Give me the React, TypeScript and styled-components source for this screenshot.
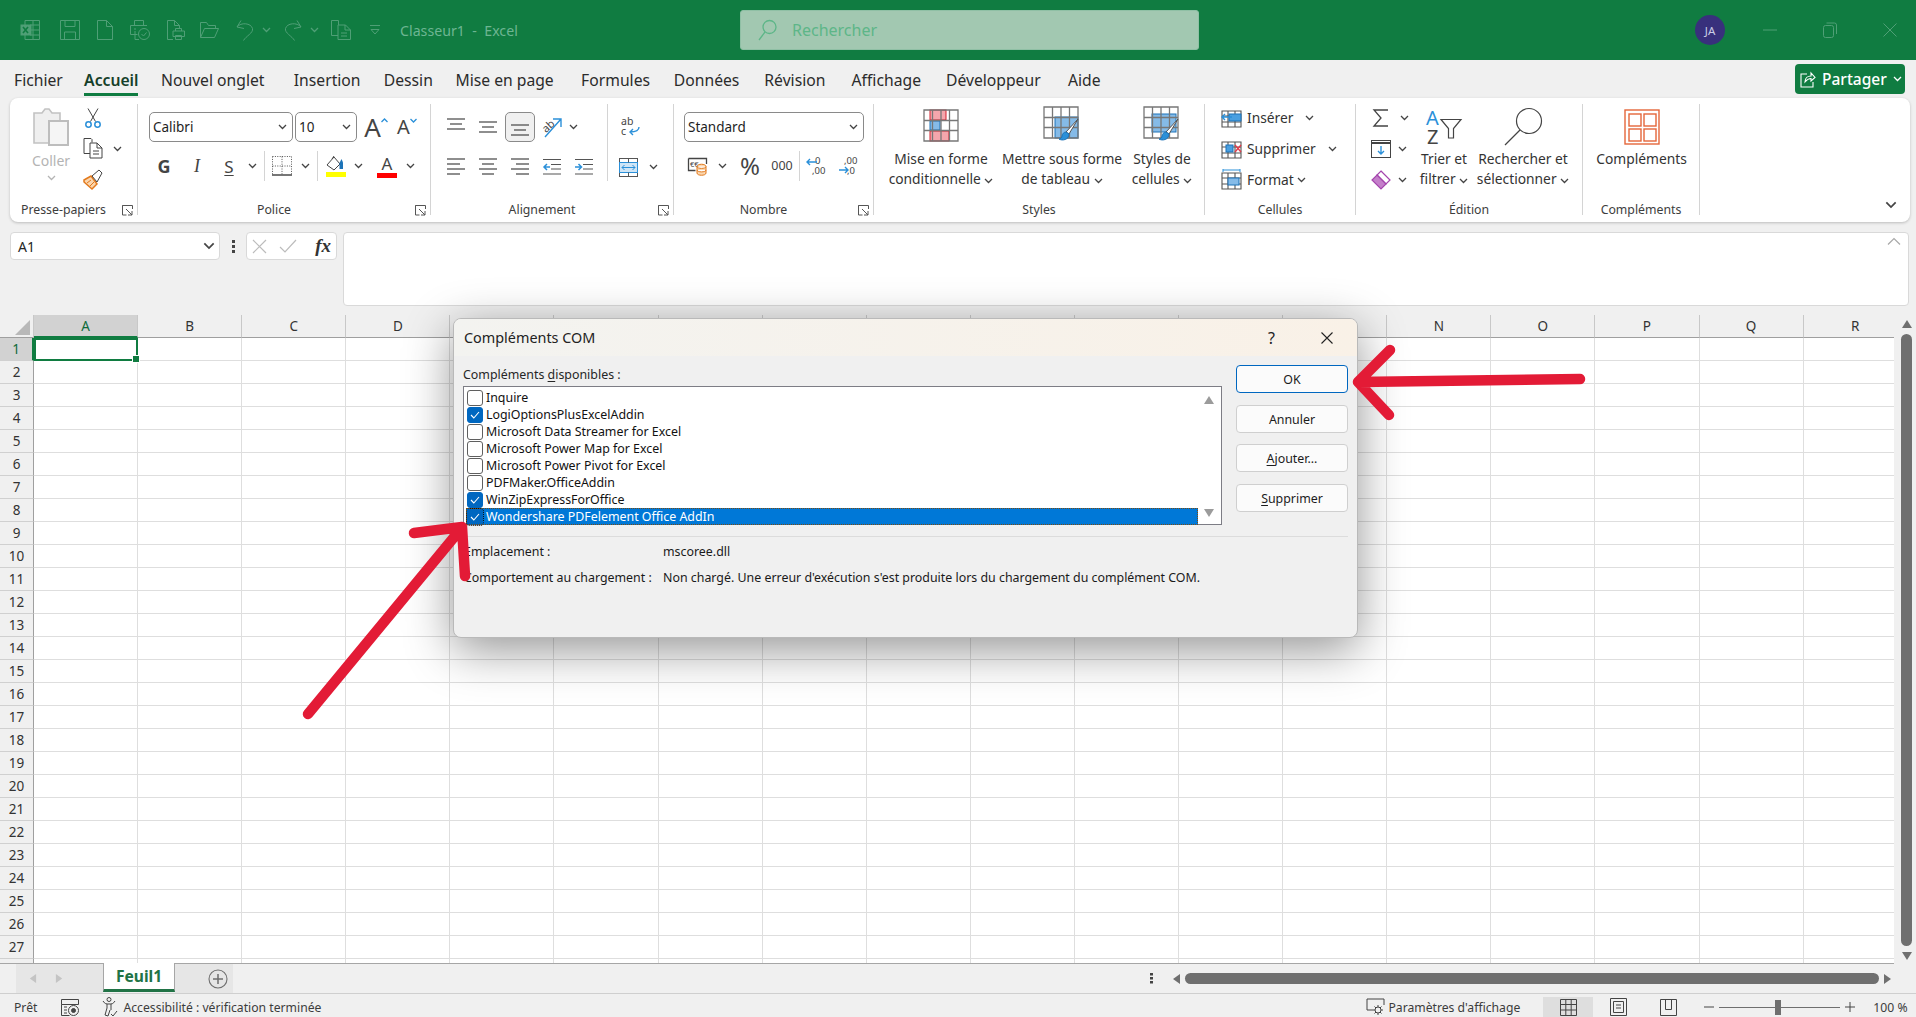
import React from "react"
import styled, { createGlobalStyle } from "styled-components"

const FONT = `"Noto Sans", "Open Sans", sans-serif`
const GREEN = "#107c41"
const DIM = "#4f9f76"
const BLUE = "#2b90d9"

const Global = createGlobalStyle`
  html, body { margin: 0; padding: 0; height: 100%; overflow: hidden; background: #f0f0f0; }
  body { font-family: ${FONT}; color: #262626; }
  * { box-sizing: border-box; }
  svg { overflow: visible; }
`

const Page = styled.div`
  position: relative;
  width: 100vw;
  height: 100vh;
  display: flex;
  flex-direction: column;
  overflow: hidden;
  background: #f0f0f0;
`

/* title bar */
const TitleBar = styled.div`
  height: 60px;
  flex: none;
  display: flex;
  align-items: center;
  background: ${GREEN};
`
const Tool = styled.span<{ $w: number; $ml?: number; $h?: number }>`
  flex: none;
  display: inline-flex;
  align-items: center;
  justify-content: center;
  width: ${(p) => p.$w}px;
  height: ${(p) => p.$h ?? 24}px;
  margin-left: ${(p) => p.$ml ?? 0}px;
`
const DocTitle = styled.span`
  margin-left: 18px;
  font-size: 14.2px;
  color: #6db592;
  white-space: pre;
`
const SearchBox = styled.div`
  position: absolute;
  left: 740px;
  top: 10px;
  width: 459px;
  height: 40px;
  display: flex;
  align-items: center;
  gap: 15px;
  padding: 0 17px;
  border-radius: 3px;
  border: 1px solid #8fc0a5;
  background: #a2c8b1;
  color: #5db688;
  font-size: 16px;
`
const Avatar = styled.span`
  position: absolute;
  left: 1695px;
  top: 15px;
  width: 30px;
  height: 30px;
  border-radius: 50%;
  background: #38307c;
  color: #c9cde6;
  font-size: 11.5px;
  display: flex;
  align-items: center;
  justify-content: center;
`
const WindowButtons = styled.div`
  position: absolute;
  left: 1740px;
  top: 18px;
  display: flex;
`

/* tabs */
const TabRow = styled.div`
  height: 38px;
  flex: none;
  display: flex;
  align-items: flex-start;
  padding: 0 11px 0 14px;
`
const Tab = styled.span<{ $on?: boolean; $mr: number }>`
  position: relative;
  margin-right: ${(p) => p.$mr}px;
  height: 36px;
  line-height: 40px;
  font-size: 15.7px;
  white-space: nowrap;
  font-weight: ${(p) => (p.$on ? 600 : 400)};
  color: ${(p) => (p.$on ? "#163f2a" : "#2b2b2b")};
  border-bottom: ${(p) => (p.$on ? `3px solid ${GREEN}` : "3px solid transparent")};
`
const Share = styled.button`
  margin: 4px 0 0 auto;
  width: 110px;
  height: 30px;
  border: 0;
  border-radius: 4px;
  background: ${GREEN};
  color: #fff;
  display: flex;
  align-items: center;
  gap: 6px;
  padding: 0 5px;
  font: 500 15.5px ${FONT};
`

/* ribbon */
const Ribbon = styled.div`
  position: relative;
  flex: none;
  height: 124px;
  margin: 0 6px 0 10px;
  padding: 6px 0 7px;
  display: flex;
  background: #fff;
  border-radius: 8px;
  box-shadow: 0 1px 3px rgba(0, 0, 0, 0.22);
`
const Group = styled.div<{ $w: number }>`
  flex: none;
  width: ${(p) => p.$w}px;
  height: 100%;
  display: flex;
  flex-direction: column;
  border-right: 1px solid #d4d4d4;
`
const GroupBody = styled.div<{ $pl?: number }>`
  flex: 1;
  min-height: 0;
  padding-left: ${(p) => p.$pl ?? 0}px;
  display: flex;
`
const GroupFoot = styled.div`
  flex: none;
  height: 20px;
  padding-top: 10px;
  display: flex;
  align-items: center;
  font-size: 12.3px;
  line-height: 14px;
  color: #3d3d3d;
  white-space: nowrap;
`
const FootLabel = styled.span`
  flex: 1;
  text-align: center;
`
const GroupLaunch = styled.span`
  flex: none;
  margin: 0 4px 0 5px;
  display: flex;
`
const Col = styled.div<{ $w?: number; $ml?: number; $mt?: number; $pt?: number; $center?: boolean }>`
  flex: none;
  display: flex;
  flex-direction: column;
  width: ${(p) => (p.$w ? `${p.$w}px` : "auto")};
  margin-left: ${(p) => p.$ml ?? 0}px;
  margin-top: ${(p) => p.$mt ?? 0}px;
  padding-top: ${(p) => p.$pt ?? 0}px;
  align-items: ${(p) => (p.$center ? "center" : "stretch")};
`
const Row = styled.div<{ $h?: number; $mt?: number; $ml?: number }>`
  display: flex;
  align-items: center;
  height: ${(p) => (p.$h ? `${p.$h}px` : "auto")};
  margin-top: ${(p) => p.$mt ?? 0}px;
  margin-left: ${(p) => p.$ml ?? 0}px;
`
const Select = styled.div<{ $w: number; $mr?: number }>`
  flex: none;
  width: ${(p) => p.$w}px;
  height: 30px;
  margin-right: ${(p) => p.$mr ?? 0}px;
  padding: 0 5px 0 3px;
  display: flex;
  align-items: center;
  justify-content: space-between;
  border: 1px solid #8a8a8a;
  border-radius: 5px;
  font-size: 13.5px;
  color: #1e1e1e;
`
const ToolSep = styled.span<{ $h?: number; $mx?: number }>`
  flex: none;
  width: 1px;
  height: ${(p) => p.$h ?? 30}px;
  margin: 0 ${(p) => p.$mx ?? 3}px;
  background: #d4d4d4;
`
const ActiveTool = styled(Tool)`
  background: #f0f0f0;
  border: 1px solid #8a8a8a;
  border-radius: 5px;
`
const Letter = styled.span<{ $size?: number; $weight?: number; $italic?: boolean; $under?: boolean; $serif?: boolean }>`
  font-family: ${(p) => (p.$serif ? `"Liberation Serif", serif` : FONT)};
  font-size: ${(p) => p.$size ?? 16}px;
  font-weight: ${(p) => p.$weight ?? 400};
  font-style: ${(p) => (p.$italic ? "italic" : "normal")};
  text-decoration: ${(p) => (p.$under ? "underline" : "none")};
  text-underline-offset: 2px;
  color: #444;
  line-height: 1;
`
const ColorBar = styled.span<{ $c: string }>`
  display: block;
  width: 20px;
  height: 5px;
  margin-top: 1px;
  background: ${(p) => p.$c};
`
const Stack = styled.span`
  display: inline-flex;
  flex-direction: column;
  align-items: center;
`
const BigButton = styled.div<{ $w: number; $ml?: number }>`
  flex: none;
  width: ${(p) => p.$w}px;
  margin-left: ${(p) => p.$ml ?? 0}px;
  display: flex;
  flex-direction: column;
  align-items: center;
  padding-top: 2px;
  font-size: 13.8px;
  line-height: 20px;
  color: #333;
  text-align: center;
  white-space: nowrap;
`
const BigIcon = styled.span`
  height: 41px;
  display: flex;
  align-items: center;
  margin-bottom: 2px;
`
const MenuRow = styled.div`
  height: 32px;
  display: flex;
  align-items: center;
  font-size: 13.8px;
  color: #333;
  white-space: nowrap;
`
const MenuIcon = styled.span`
  flex: none;
  width: 22px;
  margin: 0 5px 0 15px;
  display: flex;
  justify-content: center;
`
const MenuChev = styled.span<{ $ml: number }>`
  margin-left: ${(p) => p.$ml}px;
  display: flex;
`
const PasteLabel = styled.span`
  font-size: 14px;
  line-height: 18px;
  margin-top: 6px;
  color: #b4b4b4;
`
const PasteChev = styled.span`
  margin-top: 5px;
  display: flex;
`
const Collapse = styled.span`
  position: absolute;
  right: 13px;
  bottom: 13px;
  display: flex;
`

/* formula bar */
const FormulaBar = styled.div`
  flex: none;
  height: 74px;
  margin: 10px 7px 9px 10px;
  display: flex;
  align-items: flex-start;
`
const NameBox = styled.div`
  width: 210px;
  height: 28px;
  display: flex;
  align-items: center;
  justify-content: space-between;
  padding: 0 4px 0 7px;
  background: #fff;
  border: 1px solid #d9d9d9;
  border-radius: 4px;
  font-size: 14px;
`
const Grip = styled.span`
  width: 26px;
  height: 28px;
  display: flex;
  justify-content: center;
  align-items: center;
`
const FxBox = styled.div`
  width: 91px;
  height: 28px;
  display: flex;
  align-items: center;
  padding: 0 5px;
  gap: 12px;
  background: #fff;
  border: 1px solid #d9d9d9;
  border-radius: 4px;
`
const FxText = styled.span`
  margin-left: auto;
  font: italic 700 19px "Liberation Serif", serif;
  color: #333;
`
const FormulaInput = styled.div`
  flex: 1;
  height: 74px;
  margin-left: 6px;
  padding: 5px 8px;
  display: flex;
  justify-content: flex-end;
  background: #fff;
  border: 1px solid #d9d9d9;
  border-radius: 4px;
`

/* sheet */
const SheetArea = styled.div`
  flex: 1;
  min-height: 0;
  display: flex;
`
const Sheet = styled.div`
  flex: 1;
  min-width: 0;
  display: grid;
  grid-template-columns: 34px repeat(18, 104.1px);
  grid-auto-rows: 23px;
  overflow: hidden;
  background: #fff;
  border-bottom: 1px solid #a6a6a6;
`
const Corner = styled.div`
  position: relative;
  background: #f0f0f0;
  border-bottom: 1px solid #9f9f9f;
  border-right: 1px solid #c8c8c8;
  &::after {
    content: "";
    position: absolute;
    right: 3px;
    bottom: 2px;
    border-style: solid;
    border-width: 0 0 15px 15px;
    border-color: transparent transparent #b8b8b8 transparent;
  }
`
const ColHead = styled.div<{ $on?: boolean }>`
  display: flex;
  align-items: center;
  justify-content: center;
  font-size: 13.5px;
  color: ${(p) => (p.$on ? "#0f6b3a" : "#333")};
  background: ${(p) => (p.$on ? "#d2d2d2" : "#f0f0f0")};
  border-right: 1px solid #c8c8c8;
  border-bottom: ${(p) => (p.$on ? `2px solid ${GREEN}` : "1px solid #9f9f9f")};
`
const RowHead = styled.div<{ $on?: boolean }>`
  display: flex;
  align-items: center;
  justify-content: center;
  font-size: 13.5px;
  color: ${(p) => (p.$on ? "#0f6b3a" : "#333")};
  background: ${(p) => (p.$on ? "#d2d2d2" : "#f0f0f0")};
  border-right: ${(p) => (p.$on ? `2px solid ${GREEN}` : "1px solid #9f9f9f")};
  border-bottom: 1px solid #d0d0d0;
`
const Cell = styled.div`
  border-right: 1px solid #dedede;
  border-bottom: 1px solid #dedede;
`
const ActiveCell = styled(Cell)`
  position: relative;
  border: 2px solid ${GREEN};
  &::after {
    content: "";
    position: absolute;
    right: -4px;
    bottom: -4px;
    width: 6px;
    height: 6px;
    background: ${GREEN};
    border: 1px solid #fff;
  }
`
const VScroll = styled.div`
  flex: none;
  width: 22px;
  padding: 4px 4px 3px 7px;
  display: flex;
  flex-direction: column;
  align-items: center;
  justify-content: space-between;
`
const VThumb = styled.div`
  flex: 1;
  width: 11px;
  margin: 5px 0;
  border-radius: 6px;
  background: #6f6f6f;
`

/* sheet tabs */
const SheetBar = styled.div`
  flex: none;
  height: 30px;
  display: flex;
  align-items: flex-start;
  border-bottom: 1px solid #cfcfcf;
`
const SheetNav = styled.div`
  width: 87px;
  height: 29px;
  margin-left: 16px;
  display: flex;
  align-items: center;
  gap: 18px;
  padding-left: 12px;
  background: #e6e6e6;
`
const SheetTab = styled.div`
  width: 72px;
  height: 29px;
  margin-top: -1px;
  padding-bottom: 1px;
  display: flex;
  align-items: center;
  justify-content: center;
  background: #fff;
  border: 1px solid #a6a6a6;
  border-top: 0;
  border-bottom: 3px solid #217346;
  color: #217346;
  font-size: 15.6px;
  font-weight: 700;
`
const AddSheet = styled.div`
  width: 58px;
  height: 29px;
  display: flex;
  align-items: center;
  justify-content: flex-end;
  padding-right: 5px;
  background: #e6e6e6;
`
const Dots = styled.span`
  margin-left: 917px;
  height: 29px;
  width: 10px;
  display: flex;
  align-items: center;
`
const HScroll = styled.div`
  width: 722px;
  height: 29px;
  margin-left: 11px;
  display: flex;
  align-items: center;
  gap: 4px;
`
const HThumb = styled.div`
  flex: 1;
  height: 11px;
  border-radius: 6px;
  background: #6f6f6f;
`

/* status */
const StatusBar = styled.div`
  flex: none;
  height: 23px;
  padding-top: 3px;
  display: flex;
  align-items: center;
  font-size: 12.2px;
  color: #3c3c3c;
  white-space: nowrap;
`
const StatusText = styled.span<{ $ml: number }>`
  margin-left: ${(p) => p.$ml}px;
`
const ViewButton = styled.span<{ $on?: boolean; $ml?: number }>`
  flex: none;
  height: 100%;
  width: 50px;
  margin-left: ${(p) => p.$ml ?? 0}px;
  display: flex;
  align-items: center;
  justify-content: center;
  background: ${(p) => (p.$on ? "#dedede" : "transparent")};
`
const Zoom = styled.div`
  flex: none;
  display: flex;
  align-items: center;
  gap: 5px;
  margin-left: 11px;
`
const ZoomTrack = styled.div`
  position: relative;
  width: 121px;
  height: 1px;
  background: #6f6f6f;
  &::after {
    content: "";
    position: absolute;
    left: 56px;
    top: -7px;
    width: 6px;
    height: 15px;
    background: #6f6f6f;
  }
`

/* dialog */
const Dialog = styled.div`
  position: absolute;
  left: 453px;
  top: 318px;
  width: 905px;
  height: 320px;
  border-radius: 8px;
  background: #f0f0f0;
  border: 1px solid #b9b9b9;
  box-shadow: 0 12px 48px rgba(0, 0, 0, 0.42);
  overflow: hidden;
`
const DialogTitle = styled.div`
  height: 37px;
  display: flex;
  align-items: center;
  padding: 0 24px 0 10px;
  background: linear-gradient(90deg, #f3f3f0, #f9f1e7);
  font-size: 14.4px;
  color: #222;
`
const HelpMark = styled.span`
  margin-left: auto;
  margin-right: 46px;
  font-size: 16px;
`
const DialogBody = styled.div`
  padding: 9px 9px 0 9px;
`
const DialogMain = styled.div`
  display: flex;
  gap: 14px;
`
const ListCol = styled.div`
  width: 759px;
`
const ListLabel = styled.div`
  height: 21px;
  line-height: 19px;
  font-size: 12.4px;
  u { text-underline-offset: 2px; }
`
const List = styled.div`
  height: 139px;
  padding: 2px 1px 0;
  display: flex;
  background: #fff;
  border: 1px solid #7d7d85;
`
const ListRows = styled.div`
  flex: 1;
`
const ListItem = styled.div<{ $sel?: boolean }>`
  height: 17px;
  display: flex;
  align-items: center;
  gap: 3px;
  font-size: 12.4px;
  padding-left: 1px;
  margin-left: 1px;
  color: ${(p) => (p.$sel ? "#fff" : "#111")};
  background: ${(p) => (p.$sel ? "#0078d7" : "transparent")};
  outline: ${(p) => (p.$sel ? "1px dotted #7a4a10" : "none")};
  outline-offset: -1px;
`
const Check = styled.span<{ $on?: boolean; $sel?: boolean }>`
  flex: none;
  width: 16px;
  height: 16px;
  border-radius: 3px;
  display: flex;
  align-items: center;
  justify-content: center;
  background: ${(p) => (p.$on ? "#0067c0" : "#fff")};
  border: 1px solid ${(p) => (p.$on ? "#0067c0" : "#5f5f5f")};
  outline: ${(p) => (p.$sel ? "1px dotted #111" : "none")};
`
const ListScroll = styled.div`
  flex: none;
  width: 22px;
  padding: 6px 0 6px;
  display: flex;
  flex-direction: column;
  align-items: center;
  justify-content: space-between;
`
const ButtonCol = styled.div`
  flex: none;
  width: 112px;
  display: flex;
  flex-direction: column;
  gap: 11.6px;
`
const DlgButton = styled.div<{ $primary?: boolean }>`
  height: 28px;
  padding-top: 1px;
  display: flex;
  align-items: center;
  justify-content: center;
  background: #fbfbfb;
  border: 1px solid ${(p) => (p.$primary ? "#0067c0" : "#cfcfcf")};
  border-radius: 4px;
  font-size: 12.4px;
  color: #1c1c1c;
  u { text-underline-offset: 2px; }
`
const DialogRule = styled.div`
  height: 1px;
  margin-top: 11px;
  background: #dcdcdc;
`
const InfoGrid = styled.div`
  margin-top: 1px;
  display: grid;
  grid-template-columns: 199px 1fr;
  grid-auto-rows: 26px;
  align-items: center;
  padding-left: 1px;
  font-size: 12.4px;
  color: #1a1a1a;
`
const Arrows = styled.svg`
  position: absolute;
  left: 0;
  top: 0;
  width: 100%;
  height: 100%;
  pointer-events: none;
`

/* icons */
const Chev = ({ c = "#444", w = 9, h = 5 }: { c?: string; w?: number; h?: number }) => (
  <svg width={w} height={h + 1} viewBox="0 0 9 6" fill="none" stroke={c} strokeWidth="1.3">
    <path d="M1 1l3.5 3.5L8 1" />
  </svg>
)
const Launcher = () => (
  <svg width="11" height="11" viewBox="0 0 11 11" fill="none" stroke="#555" strokeWidth="1">
    <path d="M.5 6V.5H10.5V4" />
    <path d="M.5 .5v9.5h4" />
    <path d="M4 4l6 6M10 6v4H6" />
  </svg>
)
const ExcelIcon = () => (
  <svg width="20" height="20" viewBox="0 0 20 20" fill="none" stroke={DIM}>
    <path d="M5 .5h14.500v19H5zM10 5h9.500M10 10h9.500M10 15h9.500M13 .5v19" />
    <rect x=".5" y="4.500" width="11" height="11" fill={DIM} stroke="none" />
    <path d="M3 7l5 6M8 7l-5 6" stroke={GREEN} strokeWidth="1.600" />
  </svg>
)
const SaveIcon = () => (
  <svg width="20" height="20" viewBox="0 0 20 20" fill="none" stroke={DIM}>
    <path d="M.5.5h19v19H.5zM5 .5v6h10v-6M4.500 19.500v-7.500h11v7.500" />
  </svg>
)
const NewIcon = () => (
  <svg width="16" height="20" viewBox="0 0 16 20" fill="none" stroke={DIM}>
    <path d="M.5.5h9l6 6v13H.5zM9.500.5v6h6" />
  </svg>
)
const PreviewIcon = () => (
  <svg width="20" height="20" viewBox="0 0 20 20" fill="none" stroke={DIM}>
    <path d="M4.500 5V.5h9V5M.5 5.500h16.500M.5 5.500v9h7M5 11v8.500h4M4 9h2" />
    <circle cx="14" cy="14" r="5.500" />
    <path d="M11.500 14l2 2 3-3.500" />
  </svg>
)
const PrintIcon = () => (
  <svg width="18" height="20" viewBox="0 0 18 20" fill="none" stroke={DIM}>
    <path d="M6 19.500H.5V.5h7l5 5v3M7.500.5v5h5M6 11h11.500v5.500H6zM8.500 11V8.500h6V11M8.500 15.500h6v4h-6z" />
  </svg>
)
const OpenIcon = () => (
  <svg width="19" height="16" viewBox="0 0 19 16" fill="none" stroke={DIM}>
    <path d="M.5 15.500V.5h6l2 3h7v3M.5 15.500h14l4-9H4.500z" />
  </svg>
)
const UndoIcon = ({ flip }: { flip?: boolean }) => (
  <svg width="18" height="21" viewBox="0 0 18 21" fill="none" stroke={DIM} style={flip ? { transform: "scaleX(-1)" } : undefined}>
    <path d="M5 .5L1 7l7 1.500M1 7c4-5 14-4 15.500 1.500C17.500 13 10 16 7.500 20.500" />
  </svg>
)
const PagesIcon = () => (
  <svg width="20" height="20" viewBox="0 0 20 20" fill="none" stroke={DIM}>
    <path d="M7 15.500H.5V.5h7V5M7 5h7.500l5 5v9.500H7zM14 5v5h5.500M10 13h6M10 16h6" />
  </svg>
)
const CustomizeIcon = () => (
  <svg width="12" height="12" viewBox="0 0 12 12" fill="none" stroke={DIM}>
    <path d="M1 1.500h10M2 5.500l4 4.500 4-4.500z" />
  </svg>
)
const SearchIcon = () => (
  <svg width="19" height="22" viewBox="0 0 19 22" fill="none" stroke="#5db688" strokeWidth="1.300">
    <circle cx="11.500" cy="8" r="6.500" />
    <path d="M7 13l-6 8" />
  </svg>
)
const PasteIcon = () => (
  <svg width="36" height="38" viewBox="0 0 36 38" fill="#efefef" stroke="#c2c2c2" strokeWidth="1.600">
    <path d="M1 5h8l3-4h4l3 4h8v30H1z" />
    <rect x="16" y="13" width="19" height="24" fill="#f5f5f5" stroke="#bdbdbd" strokeWidth="2" />
  </svg>
)
const CutIcon = () => (
  <svg width="16" height="20" viewBox="0 0 16 20" fill="none" stroke="#444">
    <path d="M3 .5l7.500 13M13 .5L5.500 13.500" />
    <circle cx="3.500" cy="16.500" r="2.700" stroke={BLUE} strokeWidth="1.500" />
    <circle cx="12.500" cy="16.500" r="2.700" stroke={BLUE} strokeWidth="1.500" />
  </svg>
)
const CopyIcon = () => (
  <svg width="20" height="21" viewBox="0 0 20 21" fill="#fff" stroke="#444">
    <path d="M1 .5h7l1 1v3M1 .5v15h6" fill="none" />
    <path d="M7 5h7l5 5v10H7zM14 5v5h5M10 13h6M10 16h6" />
  </svg>
)
const BrushIcon = () => (
  <svg width="20" height="21" viewBox="0 0 20 21" fill="none">
    <path d="M1 11l7-4 6 8-5 5-8-7z" fill="#fbd6ae" stroke="#e2791c" strokeWidth="1.500" />
    <path d="M4 14l4-3M7 17l4-4" stroke="#e2791c" />
    <path d="M9 7l7-6 3 3-5 9z" fill="#fff" stroke="#444" />
  </svg>
)
const AlignLines = ({ rows, c = "#444" }: { rows: number[][]; c?: string }) => (
  <svg width="18" height="20" viewBox="0 0 18 20" fill="none" stroke={c} strokeWidth="1.200">
    {rows.map((r, i) => (
      <path key={i} d={`M${r[0]} ${r[2]}H${r[1]}`} />
    ))}
  </svg>
)
const IndentIcon = ({ right }: { right?: boolean }) => (
  <svg width="18" height="18" viewBox="0 0 18 18" fill="none" strokeWidth="1.200">
    <path d="M0 1.500H18M8 6.500H18M8 11H18M0 16H18" stroke="#555" />
    <path
      d={right ? "M0 9h6M3.500 6l3 3-3 3" : "M7 9H1M4 6L1 9l3 3"}
      stroke={BLUE}
      strokeWidth="1.500"
    />
  </svg>
)
const FontStep = ({ size, up }: { size: number; up?: boolean }) => (
  <>
    <Letter $size={size}>A</Letter>
    <svg width="7" height="5" viewBox="0 0 7 5" fill="none" stroke={BLUE} strokeWidth="1.300" style={{ marginBottom: 14 }}>
      <path d={up ? "M.5 4l3-3 3 3" : "M.5 1l3 3 3-3"} />
    </svg>
  </>
)
const BordersIcon = () => (
  <svg width="20" height="20" viewBox="0 0 20 20" fill="none" stroke="#555" strokeDasharray="1 1.400">
    <path d="M.5.5h19M.5.5v19M19.500.5v19M10 .5v19M.5 10h19" />
    <path d="M0 19h20" strokeDasharray="none" strokeWidth="1.600" />
  </svg>
)
const BucketIcon = () => (
  <svg width="20" height="15" viewBox="0 0 20 15" fill="none" stroke="#444">
    <path d="M1 9l7-8 6 7-6 6z" />
    <path d="M6 3l2-3" />
    <path d="M13.500 13V7l2-4 1.500 3.500V13" fill="#1c73b8" stroke="none" />
  </svg>
)
const OrientIcon = () => (
  <svg width="22" height="22" viewBox="0 0 22 22" fill="none">
    <text x="1" y="15" fontSize="11" fill="#444" fontFamily="Noto Sans" transform="rotate(-42 6 11)">ab</text>
    <path d="M4 21L20 3M12 3h8v8" stroke={BLUE} strokeWidth="1.400" />
  </svg>
)
const WrapIcon = () => (
  <svg width="20" height="20" viewBox="0 0 20 20" fill="none">
    <text x="0" y="8" fontSize="10.500" fill="#444" fontFamily="Noto Sans">ab</text>
    <text x="0" y="18" fontSize="10.500" fill="#444" fontFamily="Noto Sans">c</text>
    <path d="M18 10c0 4-3 5-9 5M12 12l-3 3 3 3" stroke={BLUE} strokeWidth="1.400" />
  </svg>
)
const MergeIcon = () => (
  <svg width="19" height="19" viewBox="0 0 19 19" fill="#fff" stroke="#555">
    <rect x=".5" y=".5" width="18" height="18" />
    <rect x=".5" y="4.500" width="18" height="10" fill="#cfe5f6" stroke={BLUE} />
    <path d="M3 9.500h13M5.500 7l-2.500 2.500 2.500 2.500M13.500 7l2.500 2.500-2.500 2.500" fill="none" stroke={BLUE} />
    <path d="M9.500.5v4M9.500 14.500v4" fill="none" />
  </svg>
)
const CurrencyIcon = () => (
  <svg width="20" height="20" viewBox="0 0 20 20" fill="none" stroke="#444">
    <path d="M.5 2.500h18V8M.5 2.500v12h7" strokeWidth="1.300" />
    <text x="2" y="11" fontSize="7.500" fill="#444" stroke="none" fontFamily="Noto Sans">€€</text>
    <path d="M9 10.500c0-3 9-3 9 0V17c0 3-9 3-9 0zM9 10.500c0 2.500 9 2.500 9 0M9 14c0 2.500 9 2.500 9 0" stroke="#e2791c" fill="#fbd6ae" />
  </svg>
)
const DecimalIcon = ({ more }: { more?: boolean }) => (
  <svg width="22" height="20" viewBox="0 0 22 20" fill="none">
    <text x={more ? 6 : 9} y="8" fontSize="9.500" fill="#444" fontFamily="Noto Sans">{more ? ",00" : "0"}</text>
    <text x={more ? 9 : 6} y="18" fontSize="9.500" fill="#444" fontFamily="Noto Sans">{more ? ",0" : ",00"}</text>
    <path
      d={more ? "M1 14h9M7 11l3 3-3 3" : "M1 6h10M4 3L1 6l3 3"}
      stroke={BLUE}
      strokeWidth="1.400"
    />
  </svg>
)
const TableBase = () => (
  <path d="M1 1h34v31H1zM1 11.500h34M1 21.500h34M9.500 1v31M18 1v31M26.500 1v31" fill="none" stroke="#777" strokeWidth="1.300" />
)
const CondFormatIcon = () => (
  <svg width="36" height="35" viewBox="0 0 36 35">
    <rect x="7" y="1" width="16" height="10" fill="#f4a6ac" stroke="#d3202e" />
    <rect x="7" y="22" width="19" height="10" fill="#f4a6ac" stroke="#d3202e" />
    <rect x="7" y="12" width="10" height="9" fill="#85bbe8" stroke="#1c73b8" />
    <TableBase />
  </svg>
)
const BrushHandle = () => (
  <g>
    <path d="M35 13L26 28 23 26z" fill="#fff" stroke="#555" />
    <path d="M23 26c-2 0-4 2-4 4 0 2-2 3-3 3 3 2 10 1 10-5z" fill="#2b90d9" stroke="#1c73b8" />
  </g>
)
const TableFormatIcon = () => (
  <svg width="38" height="42" viewBox="0 0 38 42">
    <rect x="12" y="11" width="23" height="21" fill="#85bbe8" stroke="#1c73b8" />
    <TableBase />
    <BrushHandle />
  </svg>
)
const CellStyleIcon = () => (
  <svg width="38" height="42" viewBox="0 0 38 42">
    <rect x="9" y="8" width="24" height="18" fill="#85bbe8" stroke="#1c73b8" />
    <TableBase />
    <BrushHandle />
  </svg>
)
const CellsIcon = ({ kind }: { kind: "ins" | "del" | "fmt" }) => (
  <svg width="21" height="21" viewBox="0 0 21 21" fill="none">
    <path d="M1 4h19v16H1zM1 9h19M1 15h19M7 4v16M14 4v16" stroke="#555" strokeWidth="1.100" />
    {kind === "ins" && <>
      <rect x="8" y="7" width="12" height="7" fill="#4a9fe0" stroke="#1c73b8" />
      <path d="M11 10H1M4 7l-3 3 3 3" stroke={BLUE} strokeWidth="1.400" fill="none" />
    </>}
    {kind === "del" && <>
      <rect x="5" y="7" width="7" height="7" fill="#4a9fe0" stroke="#1c73b8" />
      <path d="M14 7l6 7M20 7l-6 7" stroke="#e23b4a" strokeWidth="1.400" />
    </>}
    {kind === "fmt" && <>
      <rect x="7" y="9" width="11" height="7" fill="#85bbe8" stroke="#1c73b8" />
      <path d="M2 1h17M2 0v3M19 0v3" stroke={BLUE} />
    </>}
  </svg>
)
const SigmaIcon = () => (
  <svg width="16" height="18" viewBox="0 0 16 18" fill="none" stroke="#444" strokeWidth="1.300">
    <path d="M15 1H1l7 8-7 8h14" />
  </svg>
)
const FillIcon = () => (
  <svg width="20" height="18" viewBox="0 0 20 18" fill="#fff" stroke="#444">
    <rect x=".5" y=".5" width="19" height="17" />
    <path d="M.5 3h19" strokeWidth="2" />
    <path d="M10 6v8M7 11l3 3 3-3" stroke={BLUE} strokeWidth="1.400" fill="none" />
  </svg>
)
const EraserIcon = () => (
  <svg width="20" height="20" viewBox="0 0 20 20" stroke="#a445ad" strokeWidth="1.200">
    <path d="M10 1l9 9-4 4L6 5z" fill="#fff" />
    <path d="M6 5l9 9-5 5-9-9z" fill="#c47fca" />
  </svg>
)
const SortFilterIcon = () => (
  <svg width="36" height="36" viewBox="0 0 36 36" fill="none">
    <text x="0" y="16" fontSize="20" fill={BLUE} fontFamily="Noto Sans">A</text>
    <text x="1" y="35" fontSize="20" fill="#444" fontFamily="Noto Sans">Z</text>
    <path d="M15 10.500h20l-7.500 9V29h-5v-9.500z" stroke="#444" strokeWidth="1.200" fill="#fff" />
  </svg>
)
const FindIcon = () => (
  <svg width="38" height="38" viewBox="0 0 38 38" fill="none" stroke="#444" strokeWidth="1.200">
    <circle cx="25" cy="13" r="12.500" />
    <path d="M16 22L1 37" />
  </svg>
)
const AddinIcon = () => (
  <svg width="36" height="36" viewBox="0 0 36 36" fill="none" stroke="#e4663a" strokeWidth="1.400">
    <rect x="1" y="1" width="34" height="34" />
    <rect x="5" y="5" width="12" height="12" />
    <rect x="20" y="5" width="12" height="12" />
    <rect x="5" y="20" width="12" height="12" />
    <rect x="20" y="20" width="12" height="12" />
  </svg>
)
const ShareIcon = () => (
  <svg width="16" height="18" viewBox="0 0 16 18" fill="none" stroke="#fff" strokeWidth="1.100">
    <path d="M7 4H1v13h12v-5" />
    <path d="M5 12c0-4 3-6 6-6V3l4 4.500L11 11V8.500c-2 0-4 1-6 3.500z" />
  </svg>
)
const CheckMark = () => (
  <svg width="10" height="8" viewBox="0 0 10 8" fill="none" stroke="#fff" strokeWidth="1.100">
    <path d="M1 4l2.800 3L9 1" />
  </svg>
)
const Triangle = ({ dir, c = "#9b9b9b", s = 10 }: { dir: "up" | "down" | "left" | "right"; c?: string; s?: number }) => {
  const d = { up: "M5 1l5 8H0z", down: "M0 1h10L5 9z", left: "M2 5l7-5v10z", right: "M8 5L1 0v10z" }[dir]
  return (
    <svg width={s} height={s} viewBox="0 0 10 10" fill={c}>
      <path d={d} />
    </svg>
  )
}

const TABS: [string, number][] = [
  ["Fichier", 21.3],
  ["Accueil", 22.6],
  ["Nouvel onglet", 29.3],
  ["Insertion", 23.2],
  ["Dessin", 22.6],
  ["Mise en page", 27.4],
  ["Formules", 23.8],
  ["Données", 25],
  ["Révision", 26.2],
  ["Affichage", 25],
  ["Développeur", 27.4],
  ["Aide", 0]
]
const COLS = "ABCDEFGHIJKLMNOPQR".split("")
const ROWS = Array.from({ length: 28 }, (_, i) => i + 1)
const ADDINS = [
  { name: "Inquire", on: false },
  { name: "LogiOptionsPlusExcelAddin", on: true },
  { name: "Microsoft Data Streamer for Excel", on: false },
  { name: "Microsoft Power Map for Excel", on: false },
  { name: "Microsoft Power Pivot for Excel", on: false },
  { name: "PDFMaker.OfficeAddin", on: false },
  { name: "WinZipExpressForOffice", on: true },
  { name: "Wondershare PDFelement Office AddIn", on: true, sel: true }
]

const Foot = ({ label, launch }: { label: string; launch?: boolean }) => (
  <GroupFoot>
    <FootLabel>{label}</FootLabel>
    {launch && <GroupLaunch><Launcher /></GroupLaunch>}
  </GroupFoot>
)

export default function App() {
  return (
    <Page>
      <Global />
      <TitleBar>
        <Tool $ml={20} $w={20}><ExcelIcon /></Tool>
        <Tool $ml={20} $w={20}><SaveIcon /></Tool>
        <Tool $ml={17} $w={16}><NewIcon /></Tool>
        <Tool $ml={17} $w={20}><PreviewIcon /></Tool>
        <Tool $ml={17} $w={18}><PrintIcon /></Tool>
        <Tool $ml={15} $w={19}><OpenIcon /></Tool>
        <Tool $ml={17} $w={18}><UndoIcon /></Tool>
        <Tool $ml={7} $w={11}><Chev c={DIM} /></Tool>
        <Tool $ml={12} $w={18}><UndoIcon flip /></Tool>
        <Tool $ml={6} $w={12}><Chev c={DIM} /></Tool>
        <Tool $ml={11} $w={20}><PagesIcon /></Tool>
        <Tool $ml={17} $w={14}><CustomizeIcon /></Tool>
        <DocTitle>Classeur1  -  Excel</DocTitle>
        <SearchBox><SearchIcon />Rechercher</SearchBox>
        <Avatar>JA</Avatar>
        <WindowButtons>
          <Tool $w={60}>
            <svg width="14" height="2" fill="none" stroke={DIM}><path d="M0 1h14" /></svg>
          </Tool>
          <Tool $w={60}>
            <svg width="14" height="16" viewBox="0 0 14 16" fill="none" stroke={DIM}>
              <rect x=".5" y="3.500" width="10" height="12" rx="2" />
              <path d="M3.500 1h8a2 2 0 012 2v9" />
            </svg>
          </Tool>
          <Tool $w={60}>
            <svg width="14" height="14" fill="none" stroke={DIM}><path d="M.5.5l13 13M13.500.5l-13 13" /></svg>
          </Tool>
        </WindowButtons>
      </TitleBar>

      <TabRow>
        {TABS.map(([t, mr]) => (
          <Tab key={t} $on={t === "Accueil"} $mr={mr}>{t}</Tab>
        ))}
        <Share><ShareIcon />Partager<Chev c="#fff" /></Share>
      </TabRow>

      <Ribbon>
        <Group $w={128}>
          <GroupBody>
            <Col $w={70} $ml={6} $pt={4} $center>
              <PasteIcon />
              <PasteLabel>Coller</PasteLabel>
              <PasteChev><Chev c="#b4b4b4" /></PasteChev>
            </Col>
            <Col $ml={-5} $mt={-2}>
              <MenuRow><Tool $w={24} $h={28}><CutIcon /></Tool></MenuRow>
              <MenuRow><Tool $w={24} $h={28}><CopyIcon /></Tool><Tool $ml={6} $w={12}><Chev /></Tool></MenuRow>
              <MenuRow><Tool $w={24} $h={28}><BrushIcon /></Tool></MenuRow>
            </Col>
          </GroupBody>
          <Foot label="Presse-papiers" launch />
        </Group>

        <Group $w={293}>
          <GroupBody $pl={11}>
            <Col $pt={8}>
              <Row $h={30}>
                <Select $w={144} $mr={2}>Calibri<Chev /></Select>
                <Select $w={62} $mr={7}>10<Chev /></Select>
                <Tool $w={24} $h={28}><FontStep size={26} up /></Tool>
                <Tool $ml={7} $w={24} $h={28}><FontStep size={20} /></Tool>
              </Row>
              <Row $h={30} $mt={9}>
                <Tool $w={30}><Letter $size={18} $weight={700}>G</Letter></Tool>
                <Tool $ml={3} $w={30}><Letter $size={18} $italic $serif>I</Letter></Tool>
                <Tool $ml={2} $w={30}><Letter $size={17} $under>S</Letter></Tool>
                <Tool $w={16}><Chev /></Tool>
                <ToolSep $mx={4} />
                <Tool $w={26}><BordersIcon /></Tool>
                <Tool $ml={2} $w={16}><Chev /></Tool>
                <ToolSep $mx={4} />
                <Tool $w={28} $h={30}><Stack><BucketIcon /><ColorBar $c="#ffff00" /></Stack></Tool>
                <Tool $w={17}><Chev /></Tool>
                <Tool $ml={5} $w={30} $h={30}>
                  <Stack><Letter $size={17}>A</Letter><ColorBar $c="#ff0000" /></Stack>
                </Tool>
                <Tool $w={16}><Chev /></Tool>
              </Row>
            </Col>
          </GroupBody>
          <Foot label="Police" launch />
        </Group>

        <Group $w={243}>
          <GroupBody $pl={9}>
            <Col $pt={7}>
              <Row $h={32}>
                <Tool $w={32}><AlignLines rows={[[0, 18, 2], [3, 15, 7], [0, 18, 12]]} /></Tool>
                <Tool $w={32}><AlignLines rows={[[0, 18, 5], [3, 15, 10], [0, 18, 15]]} /></Tool>
                <ActiveTool $w={30} $ml={1} $h={30}><AlignLines rows={[[0, 18, 8], [3, 15, 13], [0, 18, 18]]} /></ActiveTool>
                <Tool $w={32} $ml={1}><OrientIcon /></Tool>
                <Tool $w={10}><Chev /></Tool>
              </Row>
              <Row $h={30} $mt={9}>
                <Tool $w={32}><AlignLines rows={[[0, 18, 2], [0, 13, 7], [0, 18, 12], [0, 13, 17]]} /></Tool>
                <Tool $w={32}><AlignLines rows={[[0, 18, 2], [3, 15, 7], [0, 18, 12], [3, 15, 17]]} /></Tool>
                <Tool $w={32}><AlignLines rows={[[0, 18, 2], [5, 18, 7], [0, 18, 12], [5, 18, 17]]} /></Tool>
                <Tool $w={32}><IndentIcon /></Tool>
                <Tool $w={32}><IndentIcon right /></Tool>
              </Row>
            </Col>
            <ToolSep $h={77} $mx={7} />
            <Col $pt={7}>
              <Row $h={32}><Tool $ml={3} $w={26}><WrapIcon /></Tool></Row>
              <Row $h={30} $mt={9}>
                <Tool $w={26}><MergeIcon /></Tool>
                <Tool $w={12} $ml={6}><Chev /></Tool>
              </Row>
            </Col>
          </GroupBody>
          <Foot label="Alignement" launch />
        </Group>

        <Group $w={200}>
          <GroupBody $pl={10}>
            <Col $pt={8}>
              <Row $h={30}><Select $w={180}>Standard<Chev /></Select></Row>
              <Row $h={30} $mt={9}>
                <Tool $w={28}><CurrencyIcon /></Tool>
                <Tool $w={12} $ml={4}><Chev /></Tool>
                <Tool $w={32} $ml={6}><Letter $size={24}>%</Letter></Tool>
                <Tool $w={30} $ml={1}><Letter $size={12.5}>000</Letter></Tool>
                <ToolSep $mx={2} />
                <Tool $w={30}><DecimalIcon /></Tool>
                <Tool $w={30} $ml={2}><DecimalIcon more /></Tool>
              </Row>
            </Col>
          </GroupBody>
          <Foot label="Nombre" launch />
        </Group>

        <Group $w={331}>
          <GroupBody>
            <BigButton $w={122} $ml={6}>
              <BigIcon><CondFormatIcon /></BigIcon>
              <span>Mise en forme</span>
              <span>conditionnelle <Chev /></span>
            </BigButton>
            <BigButton $w={120}>
              <BigIcon><TableFormatIcon /></BigIcon>
              <span>Mettre sous forme</span>
              <span>de tableau <Chev /></span>
            </BigButton>
            <BigButton $w={80}>
              <BigIcon><CellStyleIcon /></BigIcon>
              <span>Styles de</span>
              <span>cellules <Chev /></span>
            </BigButton>
          </GroupBody>
          <Foot label="Styles" />
        </Group>

        <Group $w={151}>
          <GroupBody>
            <Col $mt={-2}>
              <MenuRow><MenuIcon><CellsIcon kind="ins" /></MenuIcon>Insérer<MenuChev $ml={11}><Chev /></MenuChev></MenuRow>
              <MenuRow><MenuIcon><CellsIcon kind="del" /></MenuIcon>Supprimer<MenuChev $ml={12}><Chev /></MenuChev></MenuRow>
              <MenuRow><MenuIcon><CellsIcon kind="fmt" /></MenuIcon>Format<MenuChev $ml={3}><Chev /></MenuChev></MenuRow>
            </Col>
          </GroupBody>
          <Foot label="Cellules" />
        </Group>

        <Group $w={227}>
          <GroupBody>
            <Col $ml={14} $mt={-2}>
              <MenuRow><Tool $w={22}><SigmaIcon /></Tool><Tool $w={12} $ml={6}><Chev /></Tool></MenuRow>
              <MenuRow><Tool $w={22}><FillIcon /></Tool><Tool $w={12} $ml={4}><Chev /></Tool></MenuRow>
              <MenuRow><Tool $w={22}><EraserIcon /></Tool><Tool $w={12} $ml={4}><Chev /></Tool></MenuRow>
            </Col>
            <BigButton $w={64} $ml={2}>
              <BigIcon><SortFilterIcon /></BigIcon>
              <span>Trier et</span>
              <span>filtrer <Chev /></span>
            </BigButton>
            <BigButton $w={96} $ml={-1}>
              <BigIcon><FindIcon /></BigIcon>
              <span>Rechercher et</span>
              <span>sélectionner <Chev /></span>
            </BigButton>
          </GroupBody>
          <Foot label="Édition" />
        </Group>

        <Group $w={117}>
          <GroupBody>
            <BigButton $w={117}>
              <BigIcon><AddinIcon /></BigIcon>
              <span>Compléments</span>
            </BigButton>
          </GroupBody>
          <Foot label="Compléments" />
        </Group>

        <Collapse><Chev w={12} h={7} /></Collapse>
      </Ribbon>

      <FormulaBar>
        <NameBox>A1<Chev w={12} h={7} /></NameBox>
        <Grip>
          <svg width="3" height="13" fill="#444"><rect width="3" height="3" /><rect y="5" width="3" height="3" /><rect y="10" width="3" height="3" /></svg>
        </Grip>
        <FxBox>
          <svg width="15" height="15" fill="none" stroke="#bcbcbc" strokeWidth="1.200"><path d="M1 1l13 13M14 1L1 14" /></svg>
          <svg width="18" height="14" fill="none" stroke="#bcbcbc" strokeWidth="1.200"><path d="M1 8l5 5L17 1" /></svg>
          <FxText>fx</FxText>
        </FxBox>
        <FormulaInput>
          <svg width="12" height="7" fill="none" stroke="#a8a8a8" strokeWidth="1.200"><path d="M0 6.500l6-6 6 6" /></svg>
        </FormulaInput>
      </FormulaBar>

      <SheetArea>
        <Sheet>
          <Corner />
          {COLS.map((c) => (
            <ColHead key={c} $on={c === "A"}>{c}</ColHead>
          ))}
          {ROWS.map((r) => (
            <React.Fragment key={r}>
              <RowHead $on={r === 1}>{r <= 27 ? r : ""}</RowHead>
              {COLS.map((c) =>
                r === 1 && c === "A" ? <ActiveCell key={c} /> : <Cell key={c} />
              )}
            </React.Fragment>
          ))}
        </Sheet>
        <VScroll>
          <Triangle dir="up" c="#6f6f6f" />
          <VThumb />
          <Triangle dir="down" c="#6f6f6f" />
        </VScroll>
      </SheetArea>

      <SheetBar>
        <SheetNav>
          <Triangle dir="left" c="#c4c4c4" s={9} />
          <Triangle dir="right" c="#c4c4c4" s={9} />
        </SheetNav>
        <SheetTab>Feuil1</SheetTab>
        <AddSheet>
          <svg width="20" height="20" fill="none" stroke="#6f6f6f" strokeWidth="1.100">
            <circle cx="10" cy="10" r="9" />
            <path d="M5 10h10M10 5v10" strokeWidth="1.500" />
          </svg>
        </AddSheet>
        <Dots>
          <svg width="3" height="11" fill="#444"><rect width="3" height="2.500" /><rect y="4" width="3" height="2.500" /><rect y="8" width="3" height="2.500" /></svg>
        </Dots>
        <HScroll>
          <Triangle dir="left" c="#6f6f6f" />
          <HThumb />
          <Triangle dir="right" c="#6f6f6f" />
        </HScroll>
      </SheetBar>

      <StatusBar>
        <StatusText $ml={14}>Prêt</StatusText>
        <Tool $ml={24} $w={18}>
          <svg width="18" height="18" fill="none" stroke="#444"><path d="M.5 1.500h17v5H.5zM.5 6.500v11h8M3 9h3M3 12h3M3 15h3" /><circle cx="12.500" cy="12.500" r="5" /><circle cx="12.500" cy="12.500" r="2" fill="#444" /></svg>
        </Tool>
        <Tool $ml={23} $w={16}>
          <svg width="16" height="20" viewBox="0 0 16 20" fill="none" stroke="#444"><circle cx="7" cy="2.500" r="2" /><path d="M1 4c2 3 3 3 6 3s4 0 6-3M5 7v4l-2 7 3 1 2-6M9 7v6M9 17l2 2 4-5" /></svg>
        </Tool>
        <StatusText $ml={5}>Accessibilité : vérification terminée</StatusText>
        <Tool $ml={1045} $w={20}>
          <svg width="20" height="18" viewBox="0 0 20 18" fill="none" stroke="#444"><path d="M1 12V1h17v6M1 12h6" /><circle cx="12" cy="12" r="3" /><path d="M12 7v2M12 15v2M7 12h2M15 12h2M8.500 8.500l1.500 1.500M14 14l1.500 1.500M15.500 8.500L14 10M10 14l-1.500 1.500" /></svg>
        </Tool>
        <StatusText $ml={2}>Paramètres d'affichage</StatusText>
        <ViewButton $on $ml={23}>
          <svg width="17" height="17" fill="none" stroke="#444"><path d="M.5.5h16v16H.5zM.5 5.500h16M.5 11h16M5.800.5v16M11.200.5v16" /></svg>
        </ViewButton>
        <ViewButton>
          <svg width="17" height="18" fill="none" stroke="#444"><path d="M.5.5h16v17H.5z" /><path d="M3.500 3.500h10v11h-10zM6 7h5M6 10h5" /></svg>
        </ViewButton>
        <ViewButton>
          <svg width="17" height="17" fill="none" stroke="#444"><path d="M.5.5v16h16V.5M5.500.5v10h6V.5M.5.500h16" /></svg>
        </ViewButton>
        <Zoom>
          <svg width="10" height="10" fill="none" stroke="#444"><path d="M0 5h10" /></svg>
          <ZoomTrack />
          <svg width="10" height="10" fill="none" stroke="#444"><path d="M0 5h10M5 0v10" /></svg>
        </Zoom>
        <StatusText $ml={18}>100 %</StatusText>
      </StatusBar>

      <Dialog>
        <DialogTitle>
          Compléments COM
          <HelpMark>?</HelpMark>
          <svg width="12" height="12" fill="none" stroke="#222" strokeWidth="1.100"><path d="M.5.5l11 11M11.500.5l-11 11" /></svg>
        </DialogTitle>
        <DialogBody>
          <DialogMain>
            <ListCol>
              <ListLabel>Compléments <u>d</u>isponibles :</ListLabel>
              <List>
                <ListRows>
                  {ADDINS.map((a) => (
                    <ListItem key={a.name} $sel={a.sel}>
                      <Check $on={a.on} $sel={a.sel}>{a.on && <CheckMark />}</Check>
                      {a.name}
                    </ListItem>
                  ))}
                </ListRows>
                <ListScroll>
                  <Triangle dir="up" />
                  <Triangle dir="down" />
                </ListScroll>
              </List>
            </ListCol>
            <ButtonCol>
              <DlgButton $primary>OK</DlgButton>
              <DlgButton>Annuler</DlgButton>
              <DlgButton><span><u>A</u>jouter...</span></DlgButton>
              <DlgButton><span><u>S</u>upprimer</span></DlgButton>
            </ButtonCol>
          </DialogMain>
          <DialogRule />
          <InfoGrid>
            <span>Emplacement :</span>
            <span>mscoree.dll</span>
            <span>Comportement au chargement :</span>
            <span>Non chargé. Une erreur d'exécution s'est produite lors du chargement du complément COM.</span>
          </InfoGrid>
        </DialogBody>
      </Dialog>

      <Arrows viewBox="0 0 1916 1017">
        <g fill="none" stroke="#e31b36" strokeWidth="10.500" strokeLinecap="round" strokeLinejoin="round">
          <path d="M1580 379L1358 382M1390 350L1358 382L1389 415" />
          <path d="M308 714L460 530M414 533L462 527L465 576" />
        </g>
      </Arrows>
    </Page>
  )
}
